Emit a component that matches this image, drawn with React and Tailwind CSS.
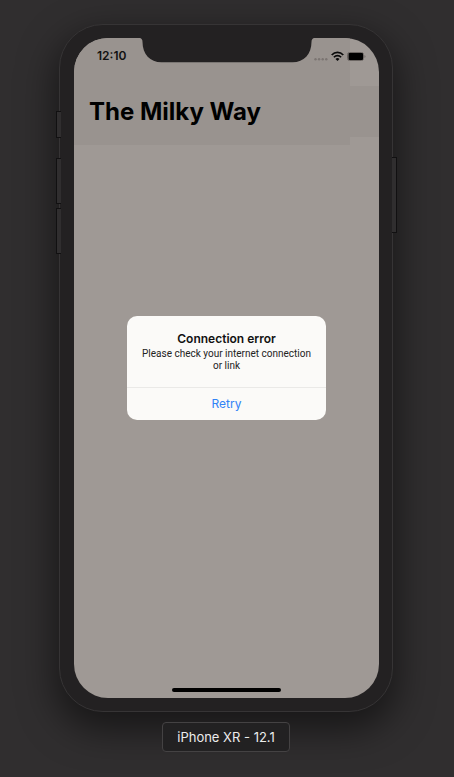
function SideButton({ label, className }) {
  return (
    <button
      type="button"
      aria-label={label}
      className={`absolute w-[5px] border-y border-[#111011] bg-[#302e2f] ${className}`}
    />
  );
}

function Notch() {
  return (
    <svg
      className="absolute top-0 left-1/2 -translate-x-1/2"
      width="175"
      height="25"
      viewBox="0 0 175 25"
      aria-hidden="true"
    >
      <path
        d="M0 0H175Q172 .3 172 4C172 16 164.500 24.300 153 24.300H22C10.500 24.300 3 16 3 4Q3 .3 0 0Z"
        fill="#232122"
      />
    </svg>
  );
}

function StatusIcons() {
  return (
    <svg width="54" height="12" viewBox="0 0 54 12" role="img" aria-label="Wi-Fi on, battery full">
      <g fill="#7b7572">
        <circle cx="2.500" cy="9.200" r="1.200" />
        <circle cx="6.100" cy="9.200" r="1.200" />
        <circle cx="9.700" cy="9.200" r="1.200" />
        <circle cx="13.300" cy="9.200" r="1.200" />
      </g>
      <g fill="none" stroke="#090909" strokeWidth="1.700">
        <path d="M18.700 5C22 1.400 27 1.400 30.300 5" />
        <path d="M20.900 7.300C23 5 26 5 28.100 7.300" />
      </g>
      <path d="M22.500 8.900Q24.500 7.200 26.500 8.900L24.500 11Z" fill="#090909" />
      <rect x="34.500" y="2.500" width="16" height="8" rx="2" fill="none" stroke="#6c6663" />
      <rect x="35.500" y="3" width="14.500" height="7" rx="1" fill="#000" />
      <path d="M51.500 5Q53.500 6.500 51.500 8Z" fill="#6c6663" />
    </svg>
  );
}

function ErrorDialog() {
  return (
    <div className="absolute inset-0 flex items-center justify-center">
      <div
        role="alertdialog"
        aria-labelledby="alert-title"
        aria-describedby="alert-text"
        className="w-[199px] overflow-hidden rounded-[10px] bg-[#fbfaf8] text-center"
      >
        <div className="px-3 pt-3.5 pb-[15px]">
          <h2 id="alert-title" className="text-[12px] leading-[18px] font-semibold text-[#111]">
            Connection error
          </h2>
          <p
            id="alert-text"
            className="font-['Roboto','Liberation_Sans',sans-serif] text-[10px] leading-[12px] text-[#222]"
          >
            Please check your internet connection or link
          </p>
        </div>
        <button
          type="button"
          className="block h-[33px] w-full border-t border-[#eae9e7] text-[12px] text-[#3183f6]"
        >
          Retry
        </button>
      </div>
    </div>
  );
}

function Phone() {
  return (
    <div className="relative w-[334px] rounded-[44px] border border-[#363435] bg-[#232122] py-[13px] pr-[13px] pl-3.5 shadow-[0_14px_36px_4px_rgba(0,0,0,0.5)]">
      <SideButton label="Mute" className="top-[86px] -left-[4px] h-[27px] border-l" />
      <SideButton label="Volume up" className="top-[133px] -left-[4px] h-[46px] border-l" />
      <SideButton label="Volume down" className="top-[183px] -left-[4px] h-[46px] border-l" />
      <SideButton label="Power" className="top-[132px] -right-[5px] h-[76px] border-r" />
      <div className="relative h-[660px] overflow-hidden rounded-[34px] bg-[#9f9995]">
        <header className="flex h-[107px]">
          <div className="flex-1 bg-[#99938f] pt-2.5 pl-[15px]">
            <div className="pl-2 text-[12px] leading-[16px] font-semibold text-[#111]">12:10</div>
            <h1 className="pt-8 text-[24px] leading-[32px] font-bold whitespace-nowrap text-black">
              The Milky Way
            </h1>
          </div>
          <div className="w-[29px] pt-12">
            <div className="h-[51px] bg-[#99938f]" />
          </div>
        </header>
        <div className="absolute top-3 right-3">
          <StatusIcons />
        </div>
        <Notch />
        <ErrorDialog />
        <div className="absolute inset-x-0 bottom-1.5 flex justify-center">
          <div className="h-1 w-[109px] rounded-full bg-black" />
        </div>
      </div>
    </div>
  );
}

export default function App() {
  return (
    <main className="flex min-h-screen flex-col items-center overflow-hidden bg-[#302e2f] pt-6 pr-0.5 font-['Inter','Liberation_Sans',sans-serif]">
      <Phone />
      <div className="relative mt-2.5 rounded-[4px] border border-[#444243] bg-[#222122] px-3.5 py-1 text-[13px] leading-5 text-[#ececec]">
        iPhone XR - 12.1
      </div>
    </main>
  );
}
